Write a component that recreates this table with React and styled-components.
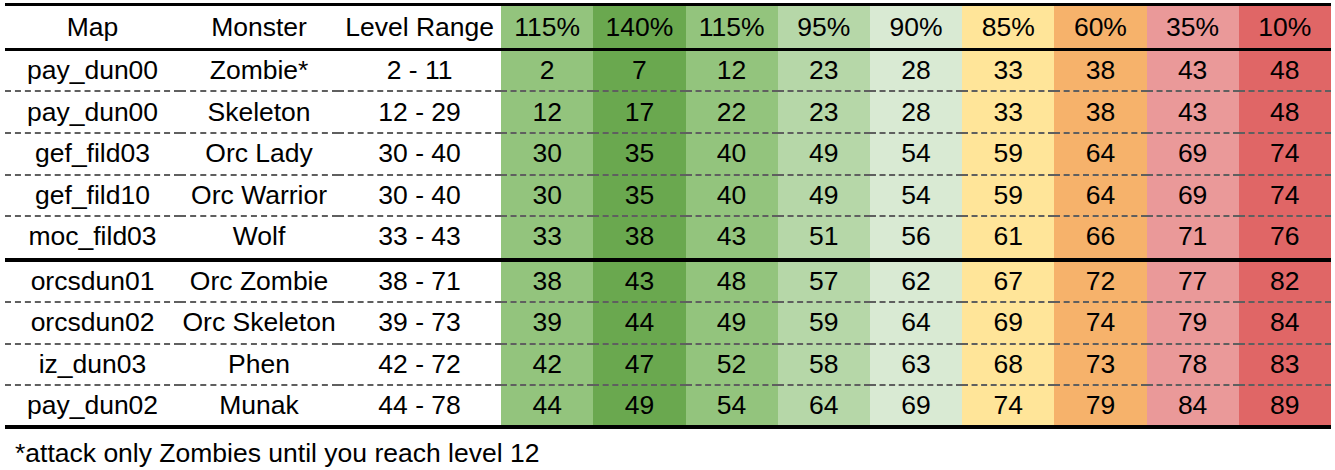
import styled, { createGlobalStyle } from "styled-components";

const GlobalStyle = createGlobalStyle`
    body {
        margin: 0;
        background: #ffffff;
        font-family: "Liberation Sans", Arial, sans-serif;
        color: #000000;
    }
`;

const Page = styled.div`
    padding: 3px 4px 0 5px;
`;

const Table = styled.table`
    width: 1326px;
    border-collapse: collapse;
    table-layout: fixed;
    font-size: 26.5px;
    border-top: 3px solid #000;
    border-bottom: 4px solid #000;
`;

const Col = styled.col`
    width: ${(p) => p.$w}px;
`;

const HeadRow = styled.tr`
    height: 45px;
    border-bottom: 3px solid #000;
`;

const Row = styled.tr`
    height: ${(p) => (p.$thick ? "44px" : "41.7px")};
    border-bottom: ${(p) => (p.$thick ? "4px solid #000" : "2px dashed #5f5f5f")};
    & > td {
        padding-bottom: ${(p) => (p.$thick ? "3px" : "0")};
    }
    &:last-child {
        border-bottom: none;
    }
`;

const HeadCell = styled.th`
    font-weight: 400;
    text-align: center;
    padding: 0;
    background: ${(p) => p.$bg || "transparent"};
`;

const Cell = styled.td`
    text-align: center;
    padding: 0;
    white-space: nowrap;
    background: ${(p) => p.$bg || "transparent"};
`;

const Note = styled.div`
    font-size: 26.5px;
    margin-top: 9px;
    padding-left: 10px;
`;

const tiers = [
    { label: "115%", bg: "#93c47d" },
    { label: "140%", bg: "#6aa84f" },
    { label: "115%", bg: "#93c47d" },
    { label: "95%", bg: "#b6d7a8" },
    { label: "90%", bg: "#d9ead3" },
    { label: "85%", bg: "#ffe599" },
    { label: "60%", bg: "#f6b26b" },
    { label: "35%", bg: "#ea9999" },
    { label: "10%", bg: "#e06666" },
];

const rows = [
    { map: "pay_dun00", monster: "Zombie*", range: "2 - 11", lv: [2, 7, 12, 23, 28, 33, 38, 43, 48] },
    { map: "pay_dun00", monster: "Skeleton", range: "12 - 29", lv: [12, 17, 22, 23, 28, 33, 38, 43, 48] },
    { map: "gef_fild03", monster: "Orc Lady", range: "30 - 40", lv: [30, 35, 40, 49, 54, 59, 64, 69, 74] },
    { map: "gef_fild10", monster: "Orc Warrior", range: "30 - 40", lv: [30, 35, 40, 49, 54, 59, 64, 69, 74] },
    { map: "moc_fild03", monster: "Wolf", range: "33 - 43", lv: [33, 38, 43, 51, 56, 61, 66, 71, 76], thick: true },
    { map: "orcsdun01", monster: "Orc Zombie", range: "38 - 71", lv: [38, 43, 48, 57, 62, 67, 72, 77, 82] },
    { map: "orcsdun02", monster: "Orc Skeleton", range: "39 - 73", lv: [39, 44, 49, 59, 64, 69, 74, 79, 84] },
    { map: "iz_dun03", monster: "Phen", range: "42 - 72", lv: [42, 47, 52, 58, 63, 68, 73, 78, 83] },
    { map: "pay_dun02", monster: "Munak", range: "44 - 78", lv: [44, 49, 54, 64, 69, 74, 79, 84, 89] },
];

const App = () => {
    return (
        <Page>
            <GlobalStyle />
            <Table>
                <colgroup>
                    <Col $w={175} />
                    <Col $w={158} />
                    <Col $w={163} />
                    {tiers.map((t, i) => (
                        <Col key={i} $w={92.2} />
                    ))}
                </colgroup>
                <thead>
                    <HeadRow>
                        <HeadCell>Map</HeadCell>
                        <HeadCell>Monster</HeadCell>
                        <HeadCell>Level Range</HeadCell>
                        {tiers.map((t, i) => (
                            <HeadCell key={i} $bg={t.bg}>{t.label}</HeadCell>
                        ))}
                    </HeadRow>
                </thead>
                <tbody>
                    {rows.map((r, i) => (
                        <Row key={i} $thick={r.thick}>
                            <Cell>{r.map}</Cell>
                            <Cell>{r.monster}</Cell>
                            <Cell>{r.range}</Cell>
                            {r.lv.map((v, j) => (
                                <Cell key={j} $bg={tiers[j].bg}>{v}</Cell>
                            ))}
                        </Row>
                    ))}
                </tbody>
            </Table>
            <Note>*attack only Zombies until you reach level 12</Note>
        </Page>
    );
};

export default App;
